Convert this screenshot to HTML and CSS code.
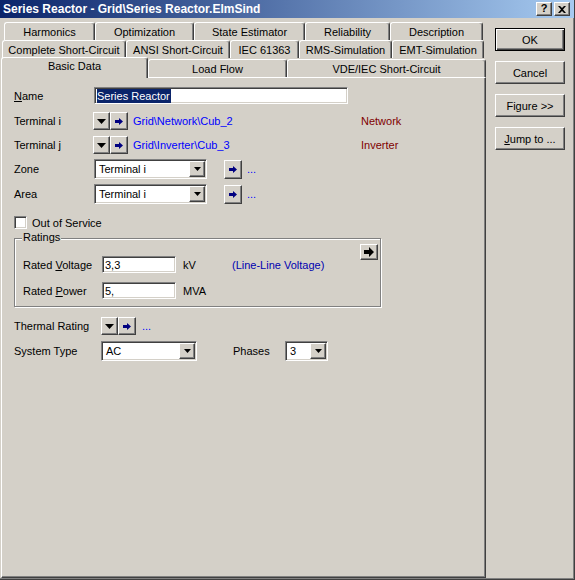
FILE: index.html
```html
<!DOCTYPE html>
<html>
<head>
<meta charset="utf-8">
<link rel="stylesheet" href="styles.css">
</head>
<body>
<div class="window">
  <div class="titlebar">
    <span class="title">Series Reactor - Grid\Series Reactor.ElmSind</span>
    <div class="tb-btns">
      <span class="tbtn q">?</span>
      <span class="tbtn"><svg width="8" height="7" viewBox="0 0 8 7"><path d="M0 0h2l2 2 2-2h2L5 3.5 8 7H6L4 5 2 7H0l3-3.5z" fill="#000"/></svg></span>
    </div>
  </div>
  <div class="body">
    <div class="leftcol">
      <div class="tabrow r1">
        <div class="tab w-harm">Harmonics</div>
        <div class="tab w-opt">Optimization</div>
        <div class="tab w-state">State Estimator</div>
        <div class="tab w-rel">Reliability</div>
        <div class="tab w-desc">Description</div>
      </div>
      <div class="tabrow r2">
        <div class="tab w-csc">Complete Short-Circuit</div>
        <div class="tab w-ansi">ANSI Short-Circuit</div>
        <div class="tab w-iec">IEC 61363</div>
        <div class="tab w-rms">RMS-Simulation</div>
        <div class="tab w-emt">EMT-Simulation</div>
      </div>
      <div class="tabrow r3">
        <div class="tab sel w-basic">Basic Data</div>
        <div class="tab w-lf">Load Flow</div>
        <div class="tab w-vde">VDE/IEC Short-Circuit</div>
      </div>
      <div class="panel">
        <div class="row row-name">
          <span class="lbl lbl-a"><u>N</u>ame</span>
          <div class="field name-field"><span class="selected">Series Reactor</span></div>
        </div>
        <div class="row row-ti">
          <span class="lbl lbl-b">Terminal i</span>
          <span class="btn sq dd"><svg width="9" height="5" viewBox="0 0 9 5"><path d="M0 0h9L4.5 5z" fill="#000"/></svg></span>
          <span class="btn sq ar"><svg width="8" height="7" viewBox="0 0 8 7"><path d="M0 2h4V0l4 3.5L4 7V5H0z" fill="#000080"/></svg></span>
          <span class="link lnk-w">Grid\Network\Cub_2</span>
          <span class="red">Network</span>
        </div>
        <div class="row row-tj">
          <span class="lbl lbl-b">Terminal j</span>
          <span class="btn sq dd"><svg width="9" height="5" viewBox="0 0 9 5"><path d="M0 0h9L4.5 5z" fill="#000"/></svg></span>
          <span class="btn sq ar"><svg width="8" height="7" viewBox="0 0 8 7"><path d="M0 2h4V0l4 3.5L4 7V5H0z" fill="#000080"/></svg></span>
          <span class="link lnk-w">Grid\Inverter\Cub_3</span>
          <span class="red">Inverter</span>
        </div>
        <div class="row row-zone">
          <span class="lbl lbl-a">Zone</span>
          <div class="combo combo-zone"><span class="ctext">Terminal i</span><span class="btn cbtn"><svg width="7" height="4" viewBox="0 0 7 4"><path d="M0 0h7L3.5 4z" fill="#000"/></svg></span></div>
          <span class="btn jump"><svg width="8" height="7" viewBox="0 0 8 7"><path d="M0 2h4V0l4 3.5L4 7V5H0z" fill="#000080"/></svg></span>
          <span class="link dots">...</span>
        </div>
        <div class="row row-area">
          <span class="lbl lbl-a">Area</span>
          <div class="combo combo-zone"><span class="ctext">Terminal i</span><span class="btn cbtn"><svg width="7" height="4" viewBox="0 0 7 4"><path d="M0 0h7L3.5 4z" fill="#000"/></svg></span></div>
          <span class="btn jump"><svg width="8" height="7" viewBox="0 0 8 7"><path d="M0 2h4V0l4 3.5L4 7V5H0z" fill="#000080"/></svg></span>
          <span class="link dots">...</span>
        </div>
        <div class="row row-oos">
          <span class="check"></span>
          <span class="check-lbl">Out of Service</span>
        </div>
        <div class="group">
          <span class="legend">Ratings</span>
          <div class="group-rows">
            <div class="row row-rv">
              <span class="lbl lbl-g">Rated <u>V</u>oltage</span>
              <div class="field num-field">3,3</div>
              <span class="unit">kV</span>
              <span class="note">(Line-Line Voltage)</span>
            </div>
            <div class="row row-rp">
              <span class="lbl lbl-g">Rated <u>P</u>ower</span>
              <div class="field num-field">5,</div>
              <span class="unit">MVA</span>
            </div>
          </div>
          <div class="group-side">
            <span class="btn big-ar"><svg width="10" height="10" viewBox="0 0 10 10"><path d="M0 3h5V0l5 5-5 5V7H0z" fill="#000"/></svg></span>
          </div>
        </div>
        <div class="row row-th">
          <span class="lbl lbl-c">Thermal Rating</span>
          <span class="btn sq dd"><svg width="9" height="5" viewBox="0 0 9 5"><path d="M0 0h9L4.5 5z" fill="#000"/></svg></span>
          <span class="btn sq ar"><svg width="8" height="7" viewBox="0 0 8 7"><path d="M0 2h4V0l4 3.5L4 7V5H0z" fill="#000080"/></svg></span>
          <span class="link dots2">...</span>
        </div>
        <div class="row row-sys">
          <span class="lbl lbl-c">System Type</span>
          <div class="combo combo-sys"><span class="ctext">AC</span><span class="btn cbtn"><svg width="7" height="4" viewBox="0 0 7 4"><path d="M0 0h7L3.5 4z" fill="#000"/></svg></span></div>
          <span class="phases-lbl">Phases</span>
          <div class="combo combo-ph"><span class="ctext">3</span><span class="btn cbtn"><svg width="7" height="4" viewBox="0 0 7 4"><path d="M0 0h7L3.5 4z" fill="#000"/></svg></span></div>
        </div>
      </div>
    </div>
    <div class="rightcol">
      <div class="pbtn default">OK</div>
      <div class="pbtn">Cancel</div>
      <div class="pbtn">Figure &gt;&gt;</div>
      <div class="pbtn"><span><u>J</u>ump to ...</span></div>
    </div>
  </div>
</div>
</body>
</html>
```
FILE: styles.css
```css
* { box-sizing: border-box; }
html, body { margin: 0; padding: 0; }
body {
  width: 575px;
  height: 580px;
  background: #d4d0c8;
  font-family: "Liberation Sans", Arial, sans-serif;
  font-size: 11px;
  color: #000;
  overflow: hidden;
}
u { text-decoration: underline; text-underline-offset: 1px; }

.window {
  width: 575px;
  height: 580px;
  background: #d4d0c8;
  border-right: 1px solid #404040;
  border-bottom: 1px solid #404040;
  box-shadow: inset -1px -1px 0 #808080;
  display: flex;
  flex-direction: column;
}

.titlebar {
  height: 18px;
  flex: none;
  display: flex;
  align-items: center;
  padding-left: 3px;
  padding-right: 4px;
  background: linear-gradient(to right, #0a246a, #a6caf0);
}
.title {
  color: #fff;
  font-weight: bold;
  font-size: 12px;
  white-space: nowrap;
}
.tb-btns {
  margin-left: auto;
  display: flex;
  gap: 2px;
}
.tbtn {
  width: 16px;
  height: 14px;
  background: #d4d0c8;
  border: 1px solid;
  border-color: #fff #404040 #404040 #fff;
  box-shadow: inset -1px -1px 0 #808080;
  display: flex;
  align-items: center;
  justify-content: center;
  font-weight: bold;
  font-size: 11px;
  line-height: 1;
}
.tbtn.q { padding-bottom: 1px; }

.body {
  flex: 1;
  display: flex;
  min-height: 0;
}

.leftcol {
  width: 486px;
  padding-left: 1px;
  padding-top: 4px;
  padding-bottom: 1px;
  display: flex;
  flex-direction: column;
}

.tabrow {
  height: 18px;
  display: flex;
  flex: none;
}
.r1 { margin-left: 3px; }
.r2 { margin-left: 1px; }
.r3 { height: 19px; align-items: flex-end; }

.tab {
  height: 18px;
  background: #d4d0c8;
  border-top: 1px solid #fff;
  border-left: 1px solid #fff;
  border-right: 1px solid #404040;
  box-shadow: inset -1px 0 0 #808080;
  border-radius: 3px 3px 0 0;
  text-align: center;
  line-height: 16px;
  padding-top: 1px;
  white-space: nowrap;
  flex: none;
}
.tab.sel {
  height: 21px;
  margin-bottom: -1px;
  padding-top: 0;
  position: relative;
  z-index: 2;
  line-height: 17px;
}

.w-harm { width: 91px; }
.w-opt { width: 99px; }
.w-state { width: 111px; }
.w-rel { width: 85px; }
.w-desc { width: 93px; }
.w-csc { width: 124px; }
.w-ansi { width: 104px; }
.w-iec { width: 69px; }
.w-rms { width: 93px; }
.w-emt { width: 92px; }
.w-basic { width: 147px; }
.w-lf { width: 139px; }
.w-vde { width: 199px; }

.panel {
  flex: 1;
  border-top: 1px solid #fff;
  border-left: 1px solid #fff;
  border-right: 1px solid #404040;
  border-bottom: 1px solid #404040;
  box-shadow: inset -1px -1px 0 #808080;
  padding-left: 12px;
}

.row {
  display: flex;
  align-items: center;
  flex: none;
}
.row-name { margin-top: 9px; height: 17px; }
.row-ti { margin-top: 8px; height: 18px; }
.row-tj { margin-top: 6px; height: 18px; }
.row-zone { margin-top: 5px; height: 20px; }
.row-area { margin-top: 5px; height: 20px; }
.row-oos { margin-top: 12px; height: 13px; }
.row-th { margin-top: 10px; height: 18px; }
.row-sys { margin-top: 6px; height: 20px; }

.lbl { flex: none; white-space: nowrap; }
.lbl-a { width: 80px; }
.lbl-b { width: 79px; }
.lbl-c { width: 87px; }
.lbl-g { width: 79px; }

.field {
  background: #fff;
  border: 1px solid;
  border-color: #808080 #fff #fff #808080;
  box-shadow: inset 1px 1px 0 #404040, inset -1px -1px 0 #d4d0c8;
  height: 17px;
  padding-left: 2px;
  display: flex;
  align-items: center;
  white-space: nowrap;
}
.name-field { width: 254px; }
.selected {
  background: #0a246a;
  color: #fff;
  line-height: 14px;
  padding-right: 1px;
}
.num-field { width: 74px; }

.btn {
  background: #d4d0c8;
  border: 1px solid;
  border-color: #fff #404040 #404040 #fff;
  box-shadow: inset -1px -1px 0 #808080;
  display: flex;
  align-items: center;
  justify-content: center;
  flex: none;
}
.btn svg { display: block; }
.sq { height: 18px; }
.dd { width: 17px; padding-top: 1px; }
.ar { width: 18px; }

.link { color: #0000ff; white-space: nowrap; }
.lnk-w { width: 228px; margin-left: 5px; }
.red { color: #800000; }

.combo {
  background: #fff;
  border: 1px solid;
  border-color: #808080 #fff #fff #808080;
  box-shadow: inset 1px 1px 0 #404040, inset -1px -1px 0 #d4d0c8;
  height: 20px;
  display: flex;
  align-items: center;
  padding: 1px;
  flex: none;
}
.ctext { flex: 1; padding-left: 3px; white-space: nowrap; }
.cbtn { width: 16px; height: 16px; }
.combo-zone { width: 113px; }
.combo-sys { width: 96px; }
.combo-ph { width: 43px; }

.jump { width: 18px; height: 19px; margin-left: 17px; }
.dots { margin-left: 5px; }
.dots2 { margin-left: 6px; }

.check {
  width: 13px;
  height: 13px;
  background: #fff;
  border: 1px solid;
  border-color: #808080 #fff #fff #808080;
  box-shadow: inset 1px 1px 0 #404040, inset -1px -1px 0 #d4d0c8;
  flex: none;
}
.check-lbl { margin-left: 5px; }

.group {
  margin-top: 9px;
  width: 367px;
  height: 69px;
  border: 1px solid #808080;
  box-shadow: 1px 1px 0 #fff, inset 1px 1px 0 #fff;
  position: relative;
  display: flex;
  flex: none;
}
.legend {
  position: absolute;
  left: 7px;
  top: -8px;
  padding: 0 1px;
  background: #d4d0c8;
  line-height: 13px;
}
.group-rows {
  flex: 1;
  padding-left: 8px;
  padding-top: 17px;
}
.row-rv { height: 17px; }
.row-rp { height: 17px; margin-top: 9px; }
.unit { width: 49px; margin-left: 7px; }
.note { color: #0000b0; white-space: nowrap; }
.group-side {
  padding-top: 5px;
  padding-right: 2px;
}
.big-ar { width: 18px; height: 16px; }

.phases-lbl { width: 52px; margin-left: 36px; }

.rightcol {
  margin-left: 9px;
  padding-top: 10px;
  display: flex;
  flex-direction: column;
  gap: 10px;
}
.pbtn {
  width: 70px;
  height: 23px;
  background: #d4d0c8;
  border: 1px solid;
  border-color: #fff #404040 #404040 #fff;
  box-shadow: inset -1px -1px 0 #808080;
  display: flex;
  align-items: center;
  justify-content: center;
  white-space: nowrap;
}
.pbtn.default {
  border: 1px solid #000;
  box-shadow: inset 1px 1px 0 #fff, inset -1px -1px 0 #404040, inset -2px -2px 0 #808080;
}
```
